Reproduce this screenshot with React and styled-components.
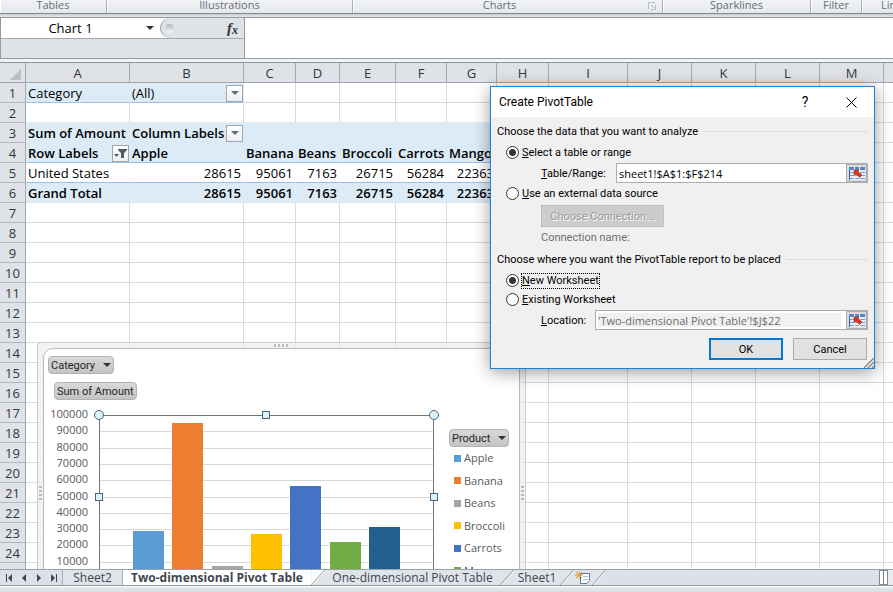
import { useState } from "react";
import styled, { createGlobalStyle } from "styled-components";

// the last, unnamed column fills what is left of a wide window
const columns = [
  ["A", 104], ["B", 114], ["C", 52], ["D", 44], ["E", 56], ["F", 51], ["G", 50],
  ["H", 52], ["I", 79], ["J", 64], ["K", 64], ["L", 64], ["M", 64], ["N", 64], ["", null],
];

// cells of the sheet by row number, in column order
const sheet = {
  1: ["Category", "(All)"],
  3: ["Sum of Amount", "Column Labels"],
  4: ["Row Labels", "Apple", "Banana", "Beans", "Broccoli", "Carrots", "Mango"],
  5: ["United States", 28615, 95061, 7163, 26715, 56284, 22363],
  6: ["Grand Total", 28615, 95061, 7163, 26715, 56284, 22363],
};

const filters = { "1B": "arrow", "3B": "arrow", "4A": "funnel" };

const series = [
  { name: "Apple", value: 28615, color: "#5b9bd5" },
  { name: "Banana", value: 95061, color: "#ed7d31" },
  { name: "Beans", value: 7163, color: "#a5a5a5" },
  { name: "Broccoli", value: 26715, color: "#ffc000" },
  { name: "Carrots", value: 56284, color: "#4472c4" },
  { name: "Mango", value: 22363, color: "#70ad47" },
  { name: "Orange", value: 31000, color: "#255e91" },
];

const BAND = "#ddebf7";
const GRID = "#d8dadc";
const PIVOT_LINE = "#9bc2e6";

function cellTone(row, col) {
  const inPivot = col < 9;
  if (row === 1 && col < 2) return { fill: BAND, right: BAND, bottom: PIVOT_LINE };
  if (row === 2 && inPivot) return { bottom: BAND };
  if (row === 3 && inPivot) return { fill: BAND, right: BAND, bottom: BAND, bold: true };
  if (row === 4 && inPivot) return { fill: BAND, right: BAND, bottom: PIVOT_LINE, bold: true };
  if (row === 5 && inPivot) return { right: "#fff", bottom: PIVOT_LINE };
  if (row === 6 && inPivot) return { fill: BAND, right: BAND, bottom: BAND, bold: true };
  return {};
}

const ArrowDown = ({ color = "#333" }) => (
  <svg width="8" height="4" viewBox="0 0 8 4">
    <path d="M0 0H8L4 4Z" fill={color} />
  </svg>
);

const Funnel = () => (
  <svg width="13" height="11" viewBox="0 0 13 11">
    <path d="M4 1H13V2L10 5V10H7V5L4 2Z" fill="#555960" />
    <path d="M0 6H5L2.5 9Z" fill="#555960" />
  </svg>
);

const RangeIcon = () => (
  <svg width="16" height="13" viewBox="0 0 16 13">
    <rect width="16" height="13" fill="#e8eff9" />
    <rect width="16" height="3" fill="#5b84c4" />
    <path d="M0 5.5H16M0 8.5H16M0 11.5H16" stroke="#7f9fce" />
    <path d="M5.5 0V13M10.5 0V13" stroke="#f5f8fd" />
    <path d="M.5 3V13" stroke="#3d5f96" />
    <path d="M5 3H10L9 4.5L13 8L10.5 10.5L7 7L5 8.5Z" fill="#d8381d" stroke="#8f2415" strokeWidth=".5" />
  </svg>
);

const NavIcon = ({ flip, end }) => (
  <svg width="8" height="8" viewBox="0 0 8 8">
    <g transform={flip ? "translate(8 0) scale(-1 1)" : undefined}>
      <path d={end ? "M1 0L5 4L1 8Z" : "M2 0L6 4L2 8Z"} fill="#3e4650" />
      {end && <path d="M6.5 0V8" stroke="#3e4650" />}
    </g>
  </svg>
);

const Slant = ({ left, right }) => (
  <SlantSvg viewBox="0 0 14 16">
    <path d="M0 0H14L0 16Z" fill={left} />
    <path d="M14 0V16H0Z" fill={right} />
    <path d="M0 16L14 0" stroke="#8e959e" />
    <path d="M1.5 16L15 .5" stroke="#fff" />
  </SlantSvg>
);

function Plot() {
  const zero = 174;
  const scale = 163 / 100000;
  const ticks = Array.from({ length: 11 }, (_, i) => i * 10000);
  return (
    <PlotSvg viewBox="0 0 391 176" role="img" aria-label="Sum of Amount by product">
      {ticks.map((t) => {
        const y = Math.round(zero - t * scale);
        return (
          <g key={t}>
            <path d={`M51 ${y + 0.5}H385`} stroke="#d9d9d9" />
            <text x="40" y={y + 3} textAnchor="end">{t}</text>
          </g>
        );
      })}
      {series.map((s, i) => (
        <rect
          key={s.name}
          x={Math.round(85 + i * 39.3)}
          y={Math.round(zero - s.value * scale)}
          width="31"
          height={Math.round(s.value * scale)}
          fill={s.color}
        />
      ))}
      <path d="M51.5 176V11.5H385.5V176" fill="none" stroke="#767676" />
      <g fill="#d9f3f7" stroke="#46637f">
        <circle cx="51" cy="11" r="4.5" />
        <circle cx="386" cy="11" r="4.5" />
        <rect x="214.5" y="7.5" width="7" height="7" />
        <rect x="47.5" y="89.5" width="7" height="7" />
        <rect x="382.5" y="89.5" width="7" height="7" />
      </g>
    </PlotSvg>
  );
}

function PivotChart() {
  return (
    <ChartFrame>
      <TopGrip />
      <SideGrip $side="left" />
      <SideGrip $side="right" />
      <Chart>
        <FieldButton>Category <ArrowDown /></FieldButton>
        <FieldButton $indent>Sum of Amount</FieldButton>
        <ChartBody>
          <Plot />
          <LegendPane>
            <FieldButton>Product <ArrowDown /></FieldButton>
            <Legend>
              {series.map((s) => (
                <LegendItem key={s.name} $color={s.color}>{s.name}</LegendItem>
              ))}
            </Legend>
          </LegendPane>
        </ChartBody>
      </Chart>
    </ChartFrame>
  );
}

function Grid() {
  const rows = Array.from({ length: 25 }, (_, i) => i + 1);
  return (
    <Table>
      <colgroup>
        <Col $width={26} />
        {columns.map(([name, width]) => <Col key={name} $width={width} />)}
      </colgroup>
      <thead>
        <tr>
          <Corner aria-label="Select all">
            <svg width="11" height="11" viewBox="0 0 11 11"><path d="M11 0V11H0Z" fill="#b9bfc6" /></svg>
          </Corner>
          {columns.map(([name]) => <ColHead key={name} scope="col">{name}</ColHead>)}
        </tr>
      </thead>
      <tbody>
        {rows.map((row) => (
          <tr key={row}>
            <RowHead scope="row">{row}</RowHead>
            {columns.map(([name], col) => {
              const value = sheet[row]?.[col];
              const tone = cellTone(row, col);
              const filter = filters[row + name];
              return (
                <Cell key={name} $fill={tone.fill} $right={tone.right} $bottom={tone.bottom} $bold={tone.bold}>
                  {value !== undefined && (
                    <CellBody $end={typeof value === "number"}>
                      {value}
                      {filter && (
                        <FilterButton aria-label={`Filter ${value}`}>
                          {filter === "arrow" ? <ArrowDown color="#666b73" /> : <Funnel />}
                        </FilterButton>
                      )}
                    </CellBody>
                  )}
                </Cell>
              );
            })}
          </tr>
        ))}
      </tbody>
    </Table>
  );
}

function CreatePivotTable() {
  const [source, setSource] = useState("table");
  const [target, setTarget] = useState("new");
  return (
    <Dialog role="dialog" aria-labelledby="dialog-title">
      <TitleBar>
        <Title id="dialog-title">Create PivotTable</Title>
        <TitleButton aria-label="Help">?</TitleButton>
        <TitleButton aria-label="Close">
          <svg width="11" height="11" viewBox="0 0 11 11"><path d="M.5 .5L10.5 10.5M10.5 .5L.5 10.5" stroke="#000" /></svg>
        </TitleButton>
      </TitleBar>
      <DialogBody>
        <GroupTitle>Choose the data that you want to analyze</GroupTitle>
        <Choice>
          <Radio name="source" checked={source === "table"} onChange={() => setSource("table")} />
          <span><u>S</u>elect a table or range</span>
        </Choice>
        <Field>
          <label htmlFor="range"><u>T</u>able/Range:</label>
          <RangeBox>
            <RangeInput id="range" defaultValue="sheet1!$A$1:$F$214" />
            <PickButton aria-label="Pick range"><RangeIcon /></PickButton>
          </RangeBox>
        </Field>
        <Choice $gap>
          <Radio name="source" checked={source === "external"} onChange={() => setSource("external")} />
          <span><u>U</u>se an external data source</span>
        </Choice>
        <ConnectionButton disabled>Choose Connection...</ConnectionButton>
        <ConnectionName>Connection name:</ConnectionName>
        <GroupTitle>Choose where you want the PivotTable report to be placed</GroupTitle>
        <Choice>
          <Radio name="target" checked={target === "new"} onChange={() => setTarget("new")} />
          <FocusText><u>N</u>ew Worksheet</FocusText>
        </Choice>
        <Choice $tight>
          <Radio name="target" checked={target === "existing"} onChange={() => setTarget("existing")} />
          <span><u>E</u>xisting Worksheet</span>
        </Choice>
        <Field>
          <label htmlFor="location"><u>L</u>ocation:</label>
          <RangeBox $wide>
            <RangeInput id="location" disabled defaultValue="'Two-dimensional Pivot Table'!$J$22" />
            <PickButton aria-label="Pick location"><RangeIcon /></PickButton>
          </RangeBox>
        </Field>
        <Actions>
          <ActionButton $primary>OK</ActionButton>
          <ActionButton>Cancel</ActionButton>
        </Actions>
      </DialogBody>
      <ResizeGrip viewBox="0 0 10 10">
        <path d="M0 10L10 0M4 10L10 4M8 10L10 8" stroke="#8c8c8c" strokeWidth="1.5" />
      </ResizeGrip>
    </Dialog>
  );
}

export default function App() {
  return (
    <Window>
      <GlobalStyle />
      <Ribbon>
        <RibbonGroup $width={107}>Tables</RibbonGroup>
        <RibbonGroup $width={246}>Illustrations</RibbonGroup>
        <RibbonGroup $width={310} $launcher>
          Charts
          <svg width="8" height="8" viewBox="0 0 8 8">
            <path d="M.5 7V.5H7M7.5 3V7.5H3M3 3L6 6" fill="none" stroke="#b9bcc1" />
          </svg>
        </RibbonGroup>
        <RibbonGroup $width={148}>Sparklines</RibbonGroup>
        <RibbonGroup $width={51}>Filter</RibbonGroup>
        <RibbonGroup $last>Links</RibbonGroup>
      </Ribbon>
      <FormulaBar>
        <NamePane>
          <NameRow>
            <NameInput aria-label="Name box" defaultValue="Chart 1" />
            <NameArrow aria-label="Names"><ArrowDown /></NameArrow>
            <FxBox>
              <Knob />
              <FxButton aria-label="Insert function">f<sub>x</sub></FxButton>
            </FxBox>
          </NameRow>
        </NamePane>
        <FormulaInput aria-label="Formula" />
      </FormulaBar>
      <Workspace>
        <Grid />
        <PivotChart />
      </Workspace>
      <TabBar>
        <TabNav>
          <NavButton aria-label="First sheet"><NavIcon flip end /></NavButton>
          <NavButton aria-label="Previous sheet"><NavIcon flip /></NavButton>
          <NavButton aria-label="Next sheet"><NavIcon /></NavButton>
          <NavButton aria-label="Last sheet"><NavIcon end /></NavButton>
        </TabNav>
        <Tab $width={60} $edge>Sheet2</Tab>
        <Tab $width={188} $active>Two-dimensional Pivot Table</Tab>
        <Slant left="#fff" right="#dfe3ea" />
        <Tab $width={175}>One-dimensional Pivot Table</Tab>
        <Slant left="#dfe3ea" right="#dfe3ea" />
        <Tab $width={46}>Sheet1</Tab>
        <Slant left="#dfe3ea" right="#dfe3ea" />
        <Tab $width={18} aria-label="Insert worksheet">
          <svg width="16" height="13" viewBox="0 0 16 13">
            <path d="M5.5 2.5H14.5V9.5L12 12.5H5.5Z" fill="#fff" stroke="#5a78a8" />
            <path d="M8 5.5H13M8 8.5H13" stroke="#a9bddb" />
            <path d="M4 0V8M0 4H8M1 1L7 7M7 1L1 7" stroke="#e59a2b" />
          </svg>
        </Tab>
        <Slant left="#dfe3ea" right="#dce0e8" />
        <TabSpace />
        <SplitHandle />
        <ScrollStub />
      </TabBar>
      <StatusBar />
      <CreatePivotTable />
    </Window>
  );
}

const GlobalStyle = createGlobalStyle`
  body {
    margin: 0;
    overflow: hidden;
    background: #fff;
  }
  * {
    box-sizing: border-box;
  }
  button, input {
    font: inherit;
    color: inherit;
    margin: 0;
    padding: 0;
    border: 0;
    border-radius: 0;
    outline: none;
    min-width: 0;
  }
  svg {
    display: block;
    flex: none;
  }
`;

const Window = styled.div`
  position: relative;
  display: flex;
  flex-direction: column;
  height: 100vh;
  overflow: hidden;
  font-family: "Open Sans", "Noto Sans", sans-serif;
  font-size: 13px;
  color: #000;
`;

const Ribbon = styled.div`
  display: flex;
  flex: none;
  height: 14px;
  background: linear-gradient(#f1f3f5, #e6e9ec);
  border-bottom: 1px solid #85898f;
  font-size: 11px;
  line-height: 10px;
  color: #686e79;
`;

const RibbonGroup = styled.div`
  display: flex;
  justify-content: ${(p) => (p.$last ? "flex-start" : "center")};
  align-items: flex-start;
  gap: 132px;
  flex: ${(p) => (p.$width ? `0 0 ${p.$width}px` : "1 0 0")};
  padding-left: ${(p) => (p.$last ? "19px" : p.$launcher ? "124px" : "0")};
  border-right: 1px solid #a9adb4;
  box-shadow: inset 1px 0 #fff;
  svg {
    margin-top: 2px;
  }
`;

const FormulaBar = styled.div`
  display: flex;
  flex: none;
  height: 49px;
  padding: 3px 0;
  background: linear-gradient(#c9cdd3, #e4e7ec 3px, #f1f3f6);
  border-bottom: 1px solid #8d9299;
`;

const NamePane = styled.div`
  flex: 0 0 245px;
  background: #dfe2e7;
  border: 1px solid #959aa2;
`;

const NameRow = styled.div`
  display: flex;
  height: 21px;
  background: #fff;
  border-bottom: 1px solid #a3a8b0;
`;

const NameInput = styled.input`
  width: 139px;
  text-align: center;
  background: #fff;
`;

const NameArrow = styled.button`
  display: flex;
  align-items: center;
  justify-content: center;
  width: 20px;
  background: #fff;
`;

const FxBox = styled.div`
  display: flex;
  flex: 1;
  align-items: center;
  justify-content: space-between;
  padding: 0 6px 0 4px;
  background: #dfe2e7;
  border-left: 1px solid #959aa2;
  border-radius: 10px 0 0 10px;
`;

const Knob = styled.span`
  width: 9px;
  height: 9px;
  border-radius: 50%;
  background: linear-gradient(#b2b6bc, #f6f7f8);
`;

const FxButton = styled.button`
  background: none;
  font: italic bold 15px/18px "Liberation Serif", serif;
  color: #333;
  sub {
    font-size: 12px;
    line-height: 1;
    vertical-align: -1px;
  }
`;

const FormulaInput = styled.input`
  flex: 1;
  background: #fff;
  border-top: 1px solid #959aa2;
  border-bottom: 1px solid #959aa2;
`;

const Workspace = styled.main`
  position: relative;
  flex: 1;
  min-height: 0;
  overflow: hidden;
`;

const Table = styled.table`
  width: 100%;
  table-layout: fixed;
  border-collapse: separate;
  border-spacing: 0;
  line-height: 18px;
`;

const Col = styled.col`
  width: ${(p) => (p.$width ? `${p.$width}px` : "auto")};
`;

const ColHead = styled.th`
  height: 20px;
  padding: 1px 0 0;
  font-weight: 400;
  color: #32363c;
  background: #dfe2e7;
  border-right: 1px solid #a5aab1;
  border-bottom: 1px solid #a0a5ad;
`;

const Corner = styled(ColHead)`
  svg {
    margin: 3px 0 0 10px;
  }
`;

const RowHead = styled(ColHead)`
  border-bottom-color: #b4b8be;
`;

const Cell = styled.td`
  height: 20px;
  padding: 1px 0 0;
  background: ${(p) => p.$fill || "#fff"};
  border-right: 1px solid ${(p) => p.$right || GRID};
  border-bottom: 1px solid ${(p) => p.$bottom || GRID};
  font-weight: ${(p) => (p.$bold ? 600 : 400)};
`;

const CellBody = styled.div`
  display: flex;
  justify-content: ${(p) => (p.$end ? "flex-end" : "space-between")};
  align-items: center;
  height: 18px;
  padding: ${(p) => (p.$end ? "0 2px 0 0" : "0 0 0 2px")};
  white-space: nowrap;
`;

const FilterButton = styled.button`
  display: flex;
  align-items: center;
  justify-content: center;
  flex: none;
  width: 17px;
  height: 17px;
  border: 1px solid #a3a7ad;
  background: linear-gradient(#fff, #eceef1);
`;

const ChartFrame = styled.section`
  position: absolute;
  left: 37px;
  top: 279px;
  width: 489px;
  height: 300px;
  padding: 5px;
  border: 1px solid #cdcdcd;
  border-radius: 4px;
  background: rgba(236, 236, 236, 0.7);
`;

const TopGrip = styled.span`
  position: absolute;
  left: 236px;
  top: 1px;
  width: 16px;
  height: 3px;
  background: repeating-linear-gradient(90deg, #bbb 0 2px, transparent 2px 4px);
`;

const SideGrip = styled.span`
  position: absolute;
  ${(p) => p.$side}: 1px;
  top: 143px;
  width: 3px;
  height: 15px;
  background: repeating-linear-gradient(#bbb 0 2px, transparent 2px 4px);
`;

const Chart = styled.div`
  height: 100%;
  padding: 7px 4px 0;
  border: 1px solid #b9b9b9;
  border-radius: 10px 10px 0 0;
  background: #fff;
  font-size: 11px;
  overflow: hidden;
`;

const FieldButton = styled.button`
  display: flex;
  align-items: center;
  gap: 8px;
  height: 18px;
  margin: ${(p) => (p.$indent ? "8px 0 0 6px" : "0")};
  padding: 0 2px;
  border: 1px solid #b3b3b3;
  border-radius: 4px;
  background: linear-gradient(#d9d9d9, #c4c4c4);
  font-family: Roboto, sans-serif;
  color: #262626;
  white-space: nowrap;
`;

const ChartBody = styled.div`
  display: flex;
  align-items: flex-start;
  gap: 10px;
  margin-top: 4px;
`;

const PlotSvg = styled.svg`
  width: 391px;
  height: 176px;
  font-size: 11px;
  text {
    fill: #595959;
  }
`;

const LegendPane = styled.div`
  padding-top: 25px;
`;

const Legend = styled.ul`
  display: flex;
  flex-direction: column;
  justify-content: space-between;
  height: 153px;
  margin: 2px 0 0;
  padding: 0 0 0 5px;
  list-style: none;
`;

const LegendItem = styled.li`
  display: flex;
  align-items: center;
  gap: 3px;
  line-height: 18px;
  color: #595959;
  &::before {
    content: "";
    width: 7px;
    height: 7px;
    background: ${(p) => p.$color};
  }
`;

const TabBar = styled.nav`
  display: flex;
  flex: none;
  height: 17px;
  border-top: 1px solid #9ba3a8;
  border-bottom: 1px solid #8e959e;
  background: #dce0e8;
  font-size: 12px;
  line-height: 15px;
  color: #3f4650;
`;

const TabNav = styled.div`
  display: flex;
  align-items: center;
  width: 63px;
  padding-left: 1px;
  border-right: 1px solid #a9afb8;
`;

const NavButton = styled.button`
  display: flex;
  align-items: center;
  justify-content: center;
  width: 15px;
  height: 15px;
  background: none;
`;

const Tab = styled.button`
  display: flex;
  align-items: center;
  justify-content: center;
  flex: 0 0 ${(p) => p.$width}px;
  background: ${(p) => (p.$active ? "#fff" : "#dfe3ea")};
  border-right: ${(p) => (p.$edge ? "1px solid #a9afb8" : "0")};
  font-weight: ${(p) => (p.$active ? 700 : 400)};
  white-space: nowrap;
`;

const SlantSvg = styled.svg`
  width: 14px;
  height: 15px;
`;

const TabSpace = styled.div`
  flex: 1;
`;

const SplitHandle = styled.div`
  width: 9px;
  border: 1px solid #858a92;
  background: linear-gradient(90deg, #fff 3px, #7b8088 3px 4px, #fff 4px);
`;

const ScrollStub = styled.div`
  width: 5px;
  background: #e9ecf1;
`;

const StatusBar = styled.footer`
  flex: none;
  height: 6px;
  border-top: 1px solid #fff;
  background: linear-gradient(#e6e9ee, #d9dde4);
`;

const Dialog = styled.form`
  position: absolute;
  left: 490px;
  top: 86px;
  width: 385px;
  border: 1px solid #1883d7;
  background: #f0f0f0;
  box-shadow: 0 3px 16px rgba(0, 0, 0, 0.4);
  font-family: Roboto, sans-serif;
  font-size: 11px;
`;

const TitleBar = styled.header`
  display: flex;
  align-items: center;
  height: 30px;
  padding-left: 8px;
  background: #fff;
`;

const Title = styled.h1`
  flex: 1;
  margin: 0;
  font-size: 12px;
  font-weight: 400;
`;

const TitleButton = styled.button.attrs({ type: "button" })`
  display: flex;
  align-items: center;
  justify-content: center;
  width: 46px;
  height: 30px;
  background: none;
  font-size: 14px;
`;

const DialogBody = styled.div`
  padding: 3px 6px 8px;
`;

const GroupTitle = styled.div`
  display: flex;
  align-items: center;
  gap: 5px;
  height: 18px;
  margin-top: 2px;
  white-space: nowrap;
  &::after {
    content: "";
    flex: 1;
    height: 1px;
    background: #dcdcdc;
  }
`;

const Choice = styled.label`
  display: flex;
  align-items: center;
  gap: 3px;
  height: 19px;
  margin-top: ${(p) => (p.$tight ? 0 : p.$gap ? 1 : 3)}px;
  padding-left: 9px;
`;

const Radio = styled.input.attrs({ type: "radio" })`
  appearance: none;
  width: 13px;
  height: 13px;
  border: 1px solid #333;
  border-radius: 50%;
  background: #fff;
  &:checked {
    background: radial-gradient(#333 0 3px, #fff 4px);
  }
`;

const FocusText = styled.span`
  line-height: 14px;
  outline: 1px dotted #000;
`;

const Field = styled.div`
  display: flex;
  align-items: center;
  justify-content: space-between;
  height: 20px;
  margin-top: 1px;
  padding-left: 44px;
`;

const RangeBox = styled.div`
  display: flex;
  flex: 0 0 ${(p) => (p.$wide ? 273 : 252)}px;
  height: 20px;
  padding-left: 2px;
  border: 1px solid #abadb3;
  background: #fff;
`;

const RangeInput = styled.input`
  flex: 1;
  background: #fff;
  font-family: "Open Sans", "Noto Sans", sans-serif;
  &:disabled {
    margin: 2px 5px 2px 0;
    background: #f0f0f0;
    color: #6d6d6d;
  }
`;

const PickButton = styled.button.attrs({ type: "button" })`
  display: flex;
  align-items: center;
  justify-content: center;
  width: 21px;
  border: 1px solid #adadad;
  background: #dcdcdf;
`;

const ConnectionButton = styled.button`
  display: block;
  width: 123px;
  height: 22px;
  margin: 2px 0 0 44px;
  border: 1px solid #bfbfbf;
  background: #ccc;
  color: #9a9a9a;
  text-shadow: 1px 1px #fff;
`;

const ConnectionName = styled.div`
  height: 20px;
  margin-top: 1px;
  padding-left: 44px;
  line-height: 20px;
  color: #6d6d6d;
`;

const Actions = styled.div`
  display: flex;
  justify-content: flex-end;
  gap: 10px;
  margin-top: 8px;
  padding-right: 1px;
`;

const ActionButton = styled.button.attrs({ type: "button" })`
  width: 74px;
  height: 22px;
  border: ${(p) => (p.$primary ? "2px solid #0078d7" : "1px solid #adadad")};
  background: #e1e1e1;
`;

const ResizeGrip = styled.svg`
  position: absolute;
  right: 0;
  bottom: 0;
  width: 10px;
  height: 10px;
`;
